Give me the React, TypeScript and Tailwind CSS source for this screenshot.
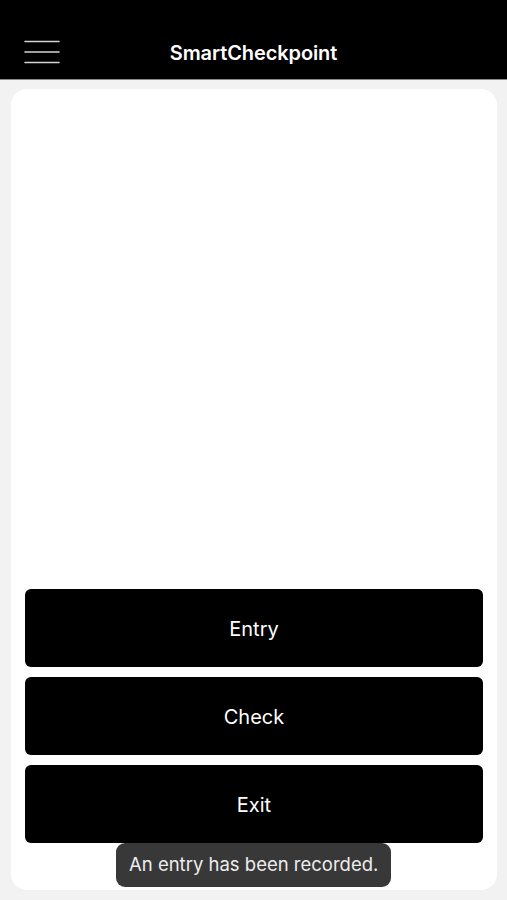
import React from 'react'

const actions = ['Entry', 'Check', 'Exit']

function MenuIcon() {
  return (
    <svg width="36" height="24" viewBox="0 0 36 24" className="block" aria-hidden="true">
      <path d="M1 1.5h34M1 12h34M1 22.5h34" stroke="#d4d4d4" strokeWidth="1.6" strokeLinecap="round" />
    </svg>
  )
}

export default function App() {
  return (
    <div
      className="h-[900px] w-full bg-[#f2f2f2] flex flex-col overflow-hidden"
      style={{ fontFamily: 'Inter, "Noto Sans", sans-serif' }}
    >
      {/* Top bar */}
      <header className="h-[80px] shrink-0 bg-black border-b border-[#8a8a8a] relative flex items-end justify-center pb-[11px]">
        <button className="absolute left-[24px] top-[40px]">
          <MenuIcon />
        </button>
        <h1 className="text-white text-[20px] font-semibold tracking-[-0.1px]">SmartCheckpoint</h1>
      </header>

      {/* Main card */}
      <main className="relative ml-[11px] mr-[10px] mt-[9px] h-[801px] bg-white rounded-[16px] flex flex-col justify-end px-[14px] pb-[47px] gap-[10px]">
        {actions.map((label) => (
          <button
            key={label}
            className="h-[78px] w-full bg-black rounded-[6px] text-white text-[20px] font-normal pt-[2px]"
          >
            {label}
          </button>
        ))}

        {/* Toast */}
        <div className="absolute left-[105px] top-[754px] h-[44px] px-[13px] flex items-center rounded-[9px] bg-[#383838] text-[#ededed] text-[18.5px] whitespace-nowrap">
          An entry has been recorded.
        </div>
      </main>
    </div>
  )
}
